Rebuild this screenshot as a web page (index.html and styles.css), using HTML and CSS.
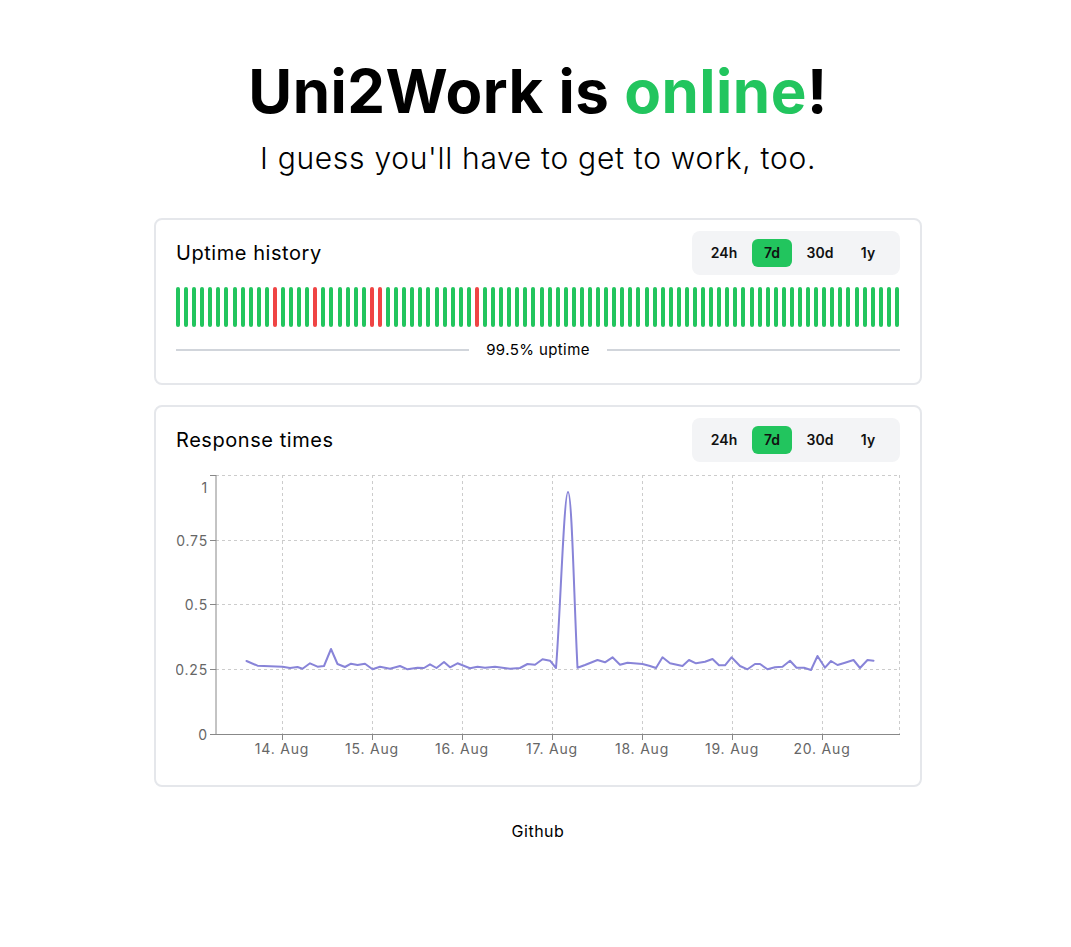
FILE: index.html
```html
<!DOCTYPE html>
<html lang="en">
<head>
<meta charset="utf-8">
<title>Uni2Work status</title>
<link rel="stylesheet" href="styles.css">
</head>
<body>
<main class="page">
  <h1 class="title">Uni2Work is <span class="ok">online</span>!</h1>
  <p class="subtitle">I guess you'll have to get to work, too.</p>

  <section class="card card-uptime">
    <div class="card-head">
      <h2 class="card-title">Uptime history</h2>
      <div class="toggle">
        <button class="tbtn">24h</button>
        <button class="tbtn active">7d</button>
        <button class="tbtn">30d</button>
        <button class="tbtn">1y</button>
      </div>
    </div>
    <div class="bars">
      <i class="b"></i><i class="b"></i><i class="b"></i><i class="b"></i><i class="b"></i><i class="b"></i><i class="b"></i><i class="b"></i><i class="b"></i><i class="b"></i><i class="b"></i><i class="b"></i>
      <i class="b r"></i>
      <i class="b"></i><i class="b"></i><i class="b"></i><i class="b"></i>
      <i class="b r"></i>
      <i class="b"></i><i class="b"></i><i class="b"></i><i class="b"></i><i class="b"></i><i class="b"></i>
      <i class="b r"></i><i class="b r"></i>
      <i class="b"></i><i class="b"></i><i class="b"></i><i class="b"></i><i class="b"></i><i class="b"></i><i class="b"></i><i class="b"></i><i class="b"></i><i class="b"></i><i class="b"></i>
      <i class="b r"></i>
      <i class="b"></i><i class="b"></i><i class="b"></i><i class="b"></i><i class="b"></i><i class="b"></i><i class="b"></i><i class="b"></i><i class="b"></i><i class="b"></i>
      <i class="b"></i><i class="b"></i><i class="b"></i><i class="b"></i><i class="b"></i><i class="b"></i><i class="b"></i><i class="b"></i><i class="b"></i><i class="b"></i>
      <i class="b"></i><i class="b"></i><i class="b"></i><i class="b"></i><i class="b"></i><i class="b"></i><i class="b"></i><i class="b"></i><i class="b"></i><i class="b"></i>
      <i class="b"></i><i class="b"></i><i class="b"></i><i class="b"></i><i class="b"></i><i class="b"></i><i class="b"></i><i class="b"></i><i class="b"></i><i class="b"></i>
      <i class="b"></i><i class="b"></i><i class="b"></i><i class="b"></i><i class="b"></i><i class="b"></i><i class="b"></i><i class="b"></i><i class="b"></i><i class="b"></i>
      <i class="b"></i><i class="b"></i>
    </div>
    <div class="uptime-row">
      <span class="rule"></span>
      <span class="uptime-text">99.5% uptime</span>
      <span class="rule"></span>
    </div>
  </section>

  <section class="card card-resp">
    <div class="card-head">
      <h2 class="card-title">Response times</h2>
      <div class="toggle">
        <button class="tbtn">24h</button>
        <button class="tbtn active">7d</button>
        <button class="tbtn">30d</button>
        <button class="tbtn">1y</button>
      </div>
    </div>
    <svg class="chart" width="724" height="294" viewBox="176 470 724 294" xmlns="http://www.w3.org/2000/svg">
      <g class="grid" stroke="#cccccc" stroke-dasharray="3 3" fill="none" stroke-width="1">
        <line x1="216" y1="475.5" x2="900" y2="475.5"/>
        <line x1="216" y1="540.5" x2="900" y2="540.5"/>
        <line x1="216" y1="604.5" x2="900" y2="604.5"/>
        <line x1="216" y1="669.5" x2="900" y2="669.5"/>
        <line x1="282.5" y1="475" x2="282.5" y2="734"/>
        <line x1="372.5" y1="475" x2="372.5" y2="734"/>
        <line x1="462.5" y1="475" x2="462.5" y2="734"/>
        <line x1="552.5" y1="475" x2="552.5" y2="734"/>
        <line x1="642.5" y1="475" x2="642.5" y2="734"/>
        <line x1="732.5" y1="475" x2="732.5" y2="734"/>
        <line x1="822.5" y1="475" x2="822.5" y2="734"/>
        <line x1="899.5" y1="475" x2="899.5" y2="734"/>
      </g>
      <g class="axes" stroke="#888888" stroke-width="1" fill="none">
        <line x1="216" y1="475" x2="216" y2="734.5"/>
        <line x1="216" y1="734.5" x2="900" y2="734.5"/>
        <line x1="210" y1="475.5" x2="216" y2="475.5"/>
        <line x1="210" y1="540.5" x2="216" y2="540.5"/>
        <line x1="210" y1="604.5" x2="216" y2="604.5"/>
        <line x1="210" y1="669.5" x2="216" y2="669.5"/>
        <line x1="210" y1="734.5" x2="216" y2="734.5"/>
        <line x1="282.5" y1="734" x2="282.5" y2="740"/>
        <line x1="372.5" y1="734" x2="372.5" y2="740"/>
        <line x1="462.5" y1="734" x2="462.5" y2="740"/>
        <line x1="552.5" y1="734" x2="552.5" y2="740"/>
        <line x1="642.5" y1="734" x2="642.5" y2="740"/>
        <line x1="732.5" y1="734" x2="732.5" y2="740"/>
        <line x1="822.5" y1="734" x2="822.5" y2="740"/>
      </g>
      <g class="ylabels" text-anchor="end">
        <text x="208" y="493">1</text>
        <text x="208" y="546">0.75</text>
        <text x="208" y="610">0.5</text>
        <text x="208" y="675">0.25</text>
        <text x="208" y="740">0</text>
      </g>
      <g class="xlabels" text-anchor="middle">
        <text x="282" y="754">14. Aug</text>
        <text x="372" y="754">15. Aug</text>
        <text x="462" y="754">16. Aug</text>
        <text x="552" y="754">17. Aug</text>
        <text x="642" y="754">18. Aug</text>
        <text x="732" y="754">19. Aug</text>
        <text x="822" y="754">20. Aug</text>
      </g>
      <path class="series" fill="none" stroke="#8884d8" stroke-width="2" stroke-linejoin="round" stroke-linecap="round"
        d="M246.5 661 L257.5 665.7 L282.5 666.7 L290 668 L297.5 667 L302.5 668.7 L310 663.3 L317.5 666.7 L324 666 L331 649 L337.5 664 L345 667 L351 663.7 L357.5 665 L365 663.7 L372.5 669.3 L380 666.7 L390 668.7 L400 666 L407.5 669.3 L417.5 667.7 L424 668 L430 664.3 L436.5 668 L444 662 L450 667.3 L457.5 663.3 L470 668.3 L477.5 666.7 L485 667.7 L495 666.7 L510 668.7 L520 668 L527.5 664 L535 664.7 L542.5 659.3 L550 660.7 L556 668 C560 620 564 492 568 492 C572 492 574 600 577.5 667.7 L585 665 L597.5 660 L605 662.3 L612.5 657.3 L620 664.7 L627.5 662.7 L642.5 664 L650 666 L656 668 L662.5 657.3 L670 663.3 L682.5 666 L689 660 L696 663.3 L705 661.7 L712.5 659 L719 665.3 L725 665.3 L731.5 657.3 L740 666 L747.5 669.3 L755 664 L760 664 L767.5 669.3 L775 667.3 L782.5 666.7 L790 660.7 L796.5 667.7 L804 667.7 L811 670 L817.5 656 L825 667.7 L831 661 L837.5 665 L845 662.7 L853.5 660 L860 668 L867.5 660 L873.5 660.7"/>
    </svg>
  </section>

  <footer class="footer"><a class="footer-link" href="#">Github</a></footer>
</main>
</body>
</html>
```

FILE: styles.css
```css
* { box-sizing: border-box; }

body {
  margin: 0;
  padding: 0 0 0 5px;
  background: #ffffff;
  color: #000000;
  font-family: Inter, "Noto Sans", "Liberation Sans", sans-serif;
}

.page {
  width: 768px;
  margin: 0 auto;
}

.title {
  margin: 55px 0 0;
  font-size: 60px;
  line-height: 72px;
  font-weight: 700;
  text-align: center;
  letter-spacing: 0.5px;
}

.title .ok { color: #22c55e; }

.subtitle {
  margin: 13px 0 0;
  font-size: 30px;
  line-height: 36px;
  font-weight: 300;
  text-align: center;
  letter-spacing: 0.7px;
}

.card {
  border: 2px solid #e5e7eb;
  border-radius: 8px;
  padding: 11px 20px 23px;
}

.card-uptime { margin-top: 42px; }

.card-resp {
  margin-top: 20px;
  padding-bottom: 21px;
}

.card-head {
  display: flex;
  justify-content: space-between;
  align-items: center;
  height: 44px;
}

.card-title {
  margin: 0;
  font-size: 20px;
  line-height: 28px;
  font-weight: 400;
  letter-spacing: 0.55px;
}

.toggle {
  display: flex;
  gap: 8px;
  padding: 8px 12px;
  background: #f3f4f6;
  border-radius: 8px;
}

.tbtn {
  border: 0;
  background: transparent;
  width: 40px;
  height: 28px;
  padding: 0;
  border-radius: 6px;
  font-family: inherit;
  font-size: 14px;
  font-weight: 600;
  color: #111111;
  line-height: 28px;
  text-align: center;
}

.tbtn.active { background: #22c55e; }

.bars {
  display: flex;
  justify-content: space-between;
  height: 40px;
  margin-top: 12px;
}

.b {
  display: block;
  width: 4px;
  height: 40px;
  background: #22c55e;
  border-radius: 2px;
}

.b.r { background: #ef4444; }

.uptime-row {
  display: flex;
  align-items: center;
  gap: 17px;
  height: 20px;
  margin-top: 13px;
}

.rule {
  flex: 1;
  height: 2px;
  background: #d1d5db;
}

.uptime-text {
  font-size: 15px;
  line-height: 20px;
  letter-spacing: 0.4px;
}

.chart {
  display: block;
  margin-top: 8px;
}

.chart text {
  font-family: Inter, "Noto Sans", sans-serif;
  font-size: 14px;
  letter-spacing: 0.8px;
  fill: #666666;
}

.footer {
  margin-top: 32px;
  text-align: center;
  font-size: 16px;
  line-height: 24px;
  letter-spacing: 0.5px;
}

.footer-link {
  color: #000000;
  text-decoration: none;
}
```
